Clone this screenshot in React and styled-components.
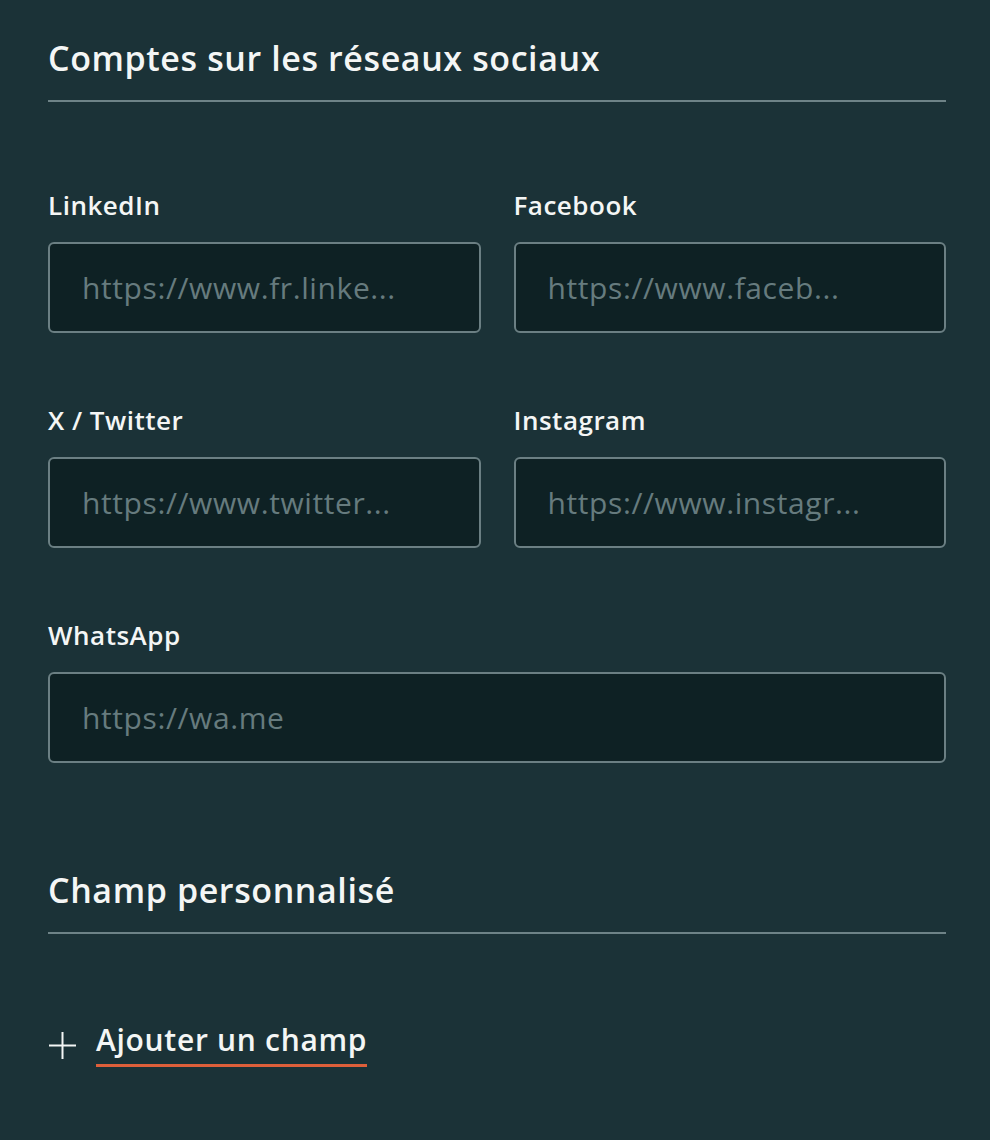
import React from "react";
import styled, { createGlobalStyle } from "styled-components";

const Global = createGlobalStyle`
  html, body { margin: 0; padding: 0; background: #1b3237; }
  body { font-family: "Open Sans", "Noto Sans", sans-serif; color: #f4f6f5; }
  * { box-sizing: border-box; }
`;

const Page = styled.div`
  width: 990px;
  min-height: 1140px;
  background: #1b3237;
  padding: 37px 44px 60px 48px;
`;

const SectionTitle = styled.h2`
  margin: 0;
  font-size: 34px;
  line-height: 42px;
  font-weight: 600;
  letter-spacing: 0.6px;
  color: #f4f6f5;
  padding-bottom: 21px;
  border-bottom: 2px solid #6e8387;
`;

const Grid = styled.div`
  display: grid;
  grid-template-columns: 1fr 1fr;
  column-gap: 33px;
  row-gap: 72px;
  margin-top: 88px;
`;

const Field = styled.label`
  display: flex;
  flex-direction: column;
  gap: 22px;
  grid-column: ${(p) => (p.$wide ? "1 / -1" : "auto")};
`;

const Label = styled.span`
  font-size: 26px;
  line-height: 30px;
  font-weight: 600;
  letter-spacing: 0.5px;
  color: #f4f6f5;
`;

const Input = styled.input`
  height: 91px;
  width: 100%;
  background: #0e2124;
  border: 2px solid #6b7f83;
  border-radius: 6px;
  padding: 0 32px;
  font-family: "Open Sans", "Noto Sans", sans-serif;
  font-size: 30px;
  letter-spacing: 0.6px;
  color: #f4f6f5;
  outline: none;
  &::placeholder { color: #667b7e; }
`;

const Section2 = styled.div`
  margin-top: 106px;
`;

const AddButton = styled.button`
  margin-top: 89px;
  display: flex;
  align-items: center;
  gap: 19px;
  background: none;
  border: none;
  padding: 0;
  color: #f4f6f5;
  cursor: pointer;
`;

const AddText = styled.span`
  font-family: "Open Sans", "Noto Sans", sans-serif;
  font-size: 30px;
  line-height: 34px;
  font-weight: 600;
  letter-spacing: 0.7px;
  padding-bottom: 7px;
  border-bottom: 3px solid #de5f3a;
`;

const fields = [
  { label: "LinkedIn", ph: "https://www.fr.linke..." },
  { label: "Facebook", ph: "https://www.faceb..." },
  { label: "X / Twitter", ph: "https://www.twitter..." },
  { label: "Instagram", ph: "https://www.instagr..." },
  { label: "WhatsApp", ph: "https://wa.me", wide: true },
];

export default function App() {
  return (
    <Page>
      <Global />
      <SectionTitle>Comptes sur les réseaux sociaux</SectionTitle>
      <Grid>
        {fields.map((f) => (
          <Field key={f.label} $wide={f.wide}>
            <Label>{f.label}</Label>
            <Input placeholder={f.ph} />
          </Field>
        ))}
      </Grid>
      <Section2>
        <SectionTitle>Champ personnalisé</SectionTitle>
      </Section2>
      <AddButton>
        <svg width="29" height="29" viewBox="0 0 29 29" fill="none">
          <path d="M14.5 1v27M1 14.5h27" stroke="#f4f6f5" strokeWidth="2" />
        </svg>
        <AddText>Ajouter un champ</AddText>
      </AddButton>
    </Page>
  );
}
